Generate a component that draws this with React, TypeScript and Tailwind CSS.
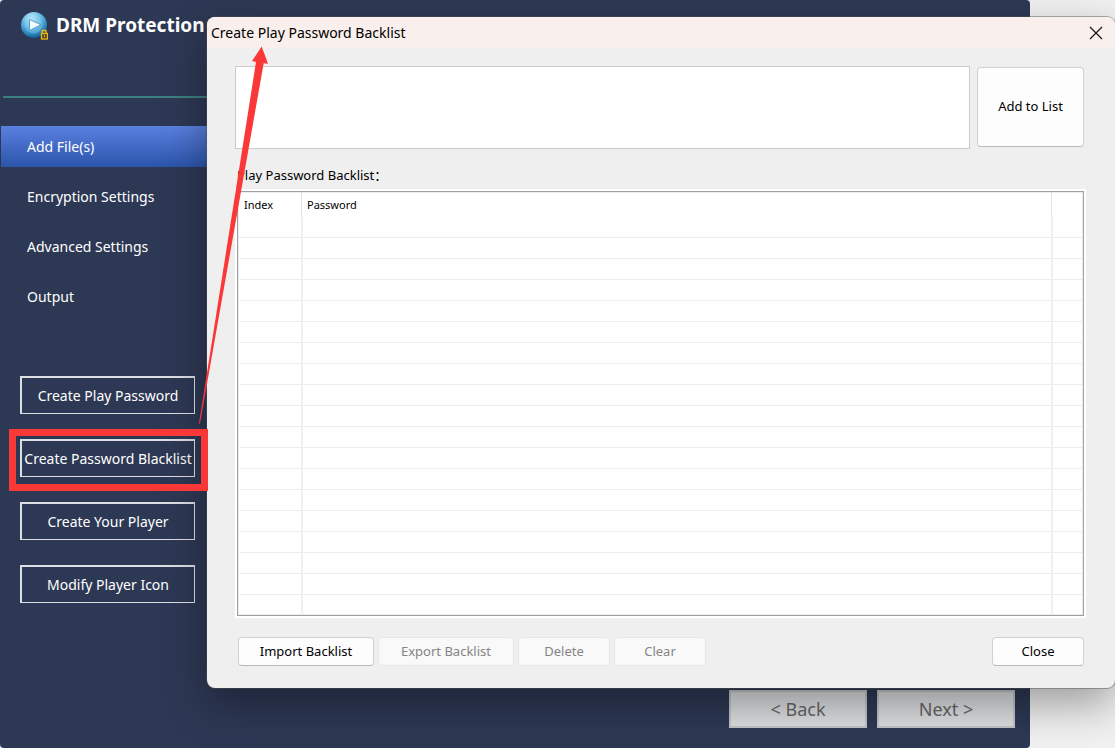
import { useState } from "react";

const NAV_ITEMS = ["Add File(s)", "Encryption Settings", "Advanced Settings", "Output"];

const TOOLS = [
  "Create Play Password",
  "Create Password Blacklist",
  "Create Your Player",
  "Modify Player Icon",
];

const ROW_COUNT = 18;

function Logo() {
  return (
    <svg width="28" height="29" viewBox="0 0 28 29" className="shrink-0" aria-hidden="true">
      <defs>
        <radialGradient id="ball" cx="0.42" cy="0.25" r="0.8">
          <stop offset="0" stopColor="#c9ecfb" />
          <stop offset="0.4" stopColor="#6fbfe6" />
          <stop offset="0.75" stopColor="#2a86bd" />
          <stop offset="1" stopColor="#0b4f86" />
        </radialGradient>
      </defs>
      <circle cx="14" cy="14" r="13" fill="url(#ball)" />
      <circle cx="13.5" cy="13.5" r="9" fill="#8fd0ee" opacity="0.35" />
      <path d="M9.5 8.5 L21 13.8 L9.5 19.5 Z" fill="#f2fbff" stroke="#3f93c4" strokeWidth="0.8" />
      <path d="M22.3 22.5 V19.5 H26 V22.5" fill="none" stroke="#f2b80f" strokeWidth="1.4" />
      <rect x="21.5" y="22.5" width="6" height="5.5" fill="#4a4a30" stroke="#f2b80f" strokeWidth="1.3" />
      <rect x="24" y="24" width="1" height="2" fill="#f2b80f" />
    </svg>
  );
}

function DialogButton({ label, disabled, wide, onClick }: {
  label: string;
  disabled?: boolean;
  wide?: boolean;
  onClick?: () => void;
}) {
  return (
    <button
      type="button"
      disabled={disabled}
      onClick={onClick}
      className={`h-[29px] rounded border ${wide ? "w-[136px]" : "w-[92px]"} ${
        disabled
          ? "border-[#e6e6e6] bg-[#f9f9f9] text-[#848484]"
          : "border-[#d0d0d0] border-b-[#b8b8b8] bg-[#fdfdfd] text-black"
      }`}
    >
      {label}
    </button>
  );
}

function BacklistDialog() {
  const [passwords, setPasswords] = useState<string[]>([]);
  const [draft, setDraft] = useState("");

  const addToList = () => {
    if (!draft.trim()) return;
    setPasswords(prev => [...prev, draft.trim()]);
    setDraft("");
  };

  return (
    <section
      role="dialog"
      aria-labelledby="dialog-title"
      className="absolute left-[207px] right-0 top-[17px] z-10 overflow-hidden rounded-lg bg-[#efefef] text-[13px] text-black shadow-[0_0_0_1px_rgba(80,80,80,0.45),0_16px_44px_rgba(0,0,0,0.36)]"
    >
      <header className="flex h-[31px] items-center justify-between bg-[#f9f0ed] pl-1 pr-3">
        <h2 id="dialog-title" className="text-sm">Create Play Password Backlist</h2>
        <button type="button" aria-label="Close dialog">
          <svg width="14" height="14" viewBox="0 0 14 14" fill="none" stroke="#1a1a1a" strokeWidth="1.3">
            <path d="M1 1 L13 13 M13 1 L1 13" />
          </svg>
        </button>
      </header>

      <div className="pb-[22px] pl-7 pr-[31px] pt-[18px]">
        <div className="flex items-start gap-[7px]">
          <textarea
            aria-label="Passwords to add"
            value={draft}
            onChange={e => setDraft(e.target.value)}
            className="h-[83px] min-w-0 flex-1 resize-none border border-[#cccccc] bg-white p-1 outline-none"
          />
          <button
            type="button"
            onClick={addToList}
            className="mt-px h-20 w-[107px] rounded border border-[#d0d0d0] border-b-[#b8b8b8] bg-[#fdfdfd]"
          >
            Add to List
          </button>
        </div>

        <h3 className="mt-4 pl-0.5 leading-5">Play Password Backlist：</h3>

        {/* Password table */}
        <div className="-mr-0.5 mt-1 border-2 border-white">
          <div className="border border-[#a0a0a0] bg-white">
            <table className="w-full table-fixed border-collapse border border-[#ececec] text-[11px]">
              <thead>
                <tr className="h-6 text-left">
                  <th className="w-[63px] border-r border-[#e2e2e2] pl-[5px] font-normal">Index</th>
                  <th className="border-r border-[#e2e2e2] pl-[5px] font-normal">Password</th>
                  <th className="w-[31px]" />
                </tr>
              </thead>
              <tbody>
                {Array.from({ length: ROW_COUNT }).map((_, i) => (
                  <tr key={i} className="h-[21px] border-b border-[#ededed]">
                    <td className="border-r-2 border-r-[#edf1f7] pl-[5px]">{passwords[i] ? i + 1 : ""}</td>
                    <td className="border-r-2 border-r-[#edf1f7] pl-[5px]">{passwords[i]}</td>
                    <td />
                  </tr>
                ))}
                <tr className="h-5">
                  <td className="border-r-2 border-r-[#edf1f7]" />
                  <td className="border-r-2 border-r-[#edf1f7]" />
                  <td />
                </tr>
              </tbody>
            </table>
          </div>
        </div>

        <div className="mt-[19px] flex justify-between pl-[3px]">
          <div className="flex gap-1">
            <DialogButton label="Import Backlist" wide />
            <DialogButton label="Export Backlist" wide disabled />
            <DialogButton label="Delete" disabled={passwords.length === 0} />
            <DialogButton label="Clear" disabled={passwords.length === 0} onClick={() => setPasswords([])} />
          </div>
          <DialogButton label="Close" />
        </div>
      </div>
    </section>
  );
}

export default function App() {
  const [active, setActive] = useState(NAV_ITEMS[0]);

  return (
    <div className="relative min-h-screen overflow-hidden bg-[#f1f1f1] pr-[85px] font-['Noto_Sans','Noto_Sans_CJK_SC',sans-serif]">
      <main className="flex min-h-screen flex-col justify-between rounded bg-[#2d3854] pb-5 text-white">
        <aside className="w-[207px]">
          <div className="flex h-[50px] items-center gap-2 pl-5">
            <Logo />
            <h1 className="whitespace-nowrap text-[19px] font-bold">DRM Protection</h1>
          </div>
          <div className="ml-[3px] mt-[46px] h-0.5 bg-[#3d7f80]" />

          <nav className="ml-px mt-7 flex flex-col gap-[9px]">
            {NAV_ITEMS.map(item => (
              <button
                key={item}
                type="button"
                onClick={() => setActive(item)}
                className={`h-[41px] pl-[26px] text-left text-sm ${
                  active === item ? "bg-linear-to-b from-[#5a80e0] to-[#2b55ab]" : ""
                }`}
              >
                {item}
              </button>
            ))}
          </nav>

          <div className="ml-5 mt-[59px] flex w-[175px] flex-col gap-[25px]">
            {TOOLS.map(tool => (
              <button
                key={tool}
                type="button"
                className="h-[38px] whitespace-nowrap border border-l-2 border-t-2 border-[#dcdee3] text-sm"
              >
                {tool}
              </button>
            ))}
          </div>
        </aside>

        <footer className="flex justify-end gap-2.5 pr-[15px] text-lg text-[#666666]">
          <button type="button" className="h-[38px] w-[138px] border-2 border-[#c3c5c8] bg-[#dcdee0]">
            &lt; Back
          </button>
          <button type="button" className="h-[38px] w-[138px] border-2 border-[#c3c5c8] bg-[#dcdee0]">
            Next &gt;
          </button>
        </footer>
      </main>

      <BacklistDialog />

      {/* Callout: frame round the blacklist button, arrow up to the dialog title */}
      <svg
        width="300"
        height="500"
        viewBox="0 0 300 500"
        className="pointer-events-none absolute left-0 top-0 z-20"
        aria-hidden="true"
      >
        <rect x="12.5" y="432.5" width="192" height="55" fill="none" stroke="#fb3838" strokeWidth="7" />
        <path d="M261.7 46.5 L268 63.8 L263.7 63.2 L200 423.5 L199 423.5 L256 62 L252 61 Z" fill="#fb3838" />
      </svg>
    </div>
  );
}
